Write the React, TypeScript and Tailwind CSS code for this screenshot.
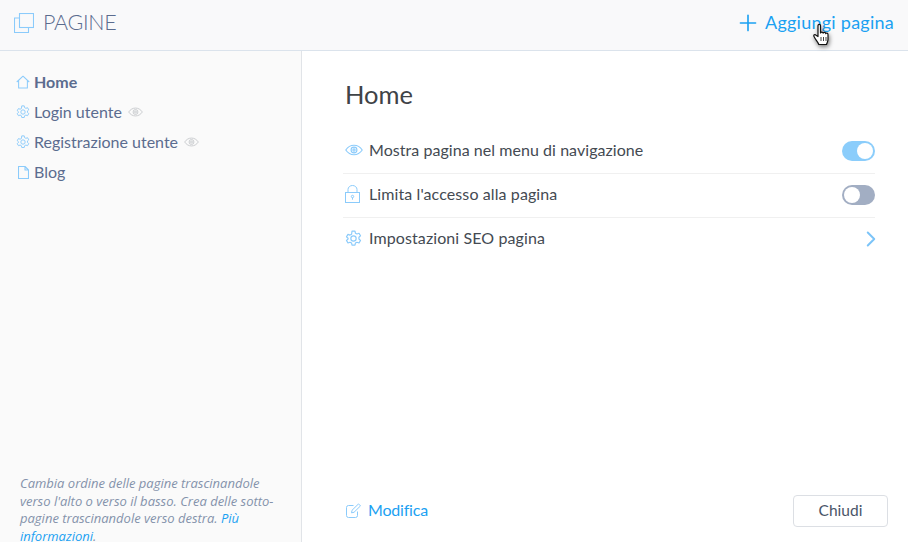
import { ChevronRight, Plus } from "lucide-react";

const pages = [
  { id: 1, title: "Home", icon: "home", active: true, hidden: false },
  { id: 2, title: "Login utente", icon: "gear", active: false, hidden: true },
  { id: 3, title: "Registrazione utente", icon: "gear", active: false, hidden: true },
  { id: 4, title: "Blog", icon: "page", active: false, hidden: false },
];

function EyeIcon({ className }: { className: string }) {
  return (
    <svg viewBox="0 0 16 10" fill="none" stroke="currentColor" strokeWidth="1" className={className}>
      <path d="M.7 5C2.600 2.200 5.100.8 8 .8s5.400 1.400 7.300 4.200C13.400 7.800 10.900 9.200 8 9.200S2.600 7.800.7 5z" />
      <circle cx="8" cy="5" r="2.600" />
      <circle cx="8" cy="5" r="1" />
    </svg>
  );
}

function GearIcon({ className }: { className: string }) {
  return (
    <svg viewBox="0 0 16 16" fill="none" stroke="currentColor" strokeWidth="1.100" className={className}>
      <path d="M6.600 1h2.800l.4 2 1.500.8 1.900-.7 1.400 2.400-1.500 1.300v1.700l1.500 1.300-1.400 2.400-1.900-.7-1.500.8-.4 2H6.600l-.4-2-1.500-.8-1.900.7-1.400-2.400 1.500-1.300V7.800L1.400 6.500l1.400-2.400 1.900.7 1.500-.8z" strokeLinejoin="round" />
      <circle cx="8" cy="8" r="2.500" />
    </svg>
  );
}

function PageIcon({ name }: { name: string }) {
  if (name === "home") {
    return (
      <svg viewBox="0 0 15 14" fill="none" stroke="currentColor" strokeWidth="1.100" className="w-[15px] h-[14px] text-[#8bcbfb]">
        <path d="M.8 7L7.500.8 14.200 7M2.800 5.500V13.500h9.400V5.500" strokeLinejoin="round" />
      </svg>
    );
  }
  if (name === "gear") {
    return <GearIcon className="w-[14px] h-[14px] text-[#8bcbfb]" />;
  }
  return (
    <svg viewBox="0 0 11 13" fill="none" stroke="currentColor" strokeWidth="1.100" className="w-[11px] h-[13px] ml-[2px] mr-[1px] text-[#8bcbfb]">
      <path d="M.5.5h6.500l3.500 3.500v8.500h-10zM7 .5V4h3.500" strokeLinejoin="round" />
    </svg>
  );
}

function Toggle({ on }: { on: boolean }) {
  return (
    <div
      className={
        on
          ? "flex justify-end items-center w-[33px] h-[20px] p-[2px] rounded-full bg-[#8bcdfb]"
          : "flex justify-start items-center w-[33px] h-[20px] p-[2px] rounded-full bg-[#a2aec3]"
      }
    >
      <div className="w-[16px] h-[16px] rounded-full bg-white" />
    </div>
  );
}

export default function App() {
  return (
    <div className="relative flex flex-col w-[908px] h-[542px] overflow-hidden bg-white font-['Lato','Open_Sans',sans-serif]">
      <header className="flex shrink-0 justify-between items-center h-[51px] pl-[14px] pr-[14px] pb-[5px] bg-[#f9f9fa] border-b border-[#dbe3ec]">
        <div className="flex items-center gap-[9px]">
          <svg viewBox="0 0 20 20" fill="none" stroke="#8bcbfb" strokeWidth="1.100" className="w-[20px] h-[20px]">
            <rect x="5.500" y="0.500" width="14" height="14" />
            <path d="M5.500 5H.5v14.500h14V14.500" />
          </svg>
          <span className="text-[21.500px] font-light text-[#5b6c8f] leading-none tracking-[-0.3px]">PAGINE</span>
        </div>
        <div className="flex items-center gap-[4px] text-[#1ba1f2]">
          <Plus size={26} strokeWidth={1.500} />
          <span className="text-[18px] tracking-[0.25px]">Aggiungi pagina</span>
        </div>
      </header>

      <div className="flex flex-1 min-h-0">
        <aside className="flex flex-col justify-between w-[302px] shrink-0 bg-[#fafafa] border-r border-[#e1e4e8] pl-[16px] pr-[20px] pt-[16px]">
          <ul className="flex flex-col">
            {pages.map((page) => (
              <li key={page.id} className="flex items-center gap-[4px] h-[30px]">
                <span className="flex justify-center w-[14px]">
                  <PageIcon name={page.icon} />
                </span>
                <span
                  className={
                    page.active
                      ? "text-[16px] font-bold text-[#5b6c8f]"
                      : "text-[16px] text-[#5b6c8f]"
                  }
                >
                  {page.title}
                </span>
                {page.hidden && <EyeIcon className="w-[15px] h-[10px] ml-[2px] text-[#c8cacd]" />}
              </li>
            ))}
          </ul>
          <p className="pl-[4px] -mb-[3px] font-['Open_Sans',sans-serif] text-[13px] leading-[17.500px] italic text-[#8492ab]">
            Cambia ordine delle pagine trascinandole verso l'alto o verso il basso. Crea delle sotto-pagine
            trascinandole verso destra. <span className="text-[#1ba1f2]">Più informazioni</span>.
          </p>
        </aside>

        <main className="flex flex-col flex-1 pl-[41px] pr-[33px] pt-[26px] pb-[15px]">
          <h1 className="pl-[2px] text-[25.500px] leading-[34px] text-[#3f4347]">Home</h1>
          <div className="flex flex-col mt-[18px]">
            <div className="flex justify-between items-center h-[45px] border-b border-[#f0f0f0]">
              <div className="flex items-center gap-[6px] pb-[2px]">
                <EyeIcon className="w-[18px] h-[12px] ml-[2px] text-[#8bcbfb]" />
                <span className="text-[16px] text-[#444a52] tracking-[0.05px]">Mostra pagina nel menu di navigazione</span>
              </div>
              <Toggle on />
            </div>
            <div className="flex justify-between items-center h-[44px] pb-[1px] border-b border-[#f0f0f0]">
              <div className="flex items-center gap-[9px] pb-[2px]">
                <svg viewBox="0 0 15 18" fill="none" stroke="#8bcbfb" strokeWidth="1" className="w-[15px] h-[18px] ml-[2px]">
                  <rect x="0.500" y="7.500" width="14" height="10" />
                  <path d="M3 7.500V4.500a4.500 4 0 0 1 9 0v3" />
                  <circle cx="7.500" cy="11.500" r="1.200" />
                  <path d="M7.500 12.700v2" />
                </svg>
                <span className="text-[16px] text-[#444a52] tracking-[0.1px]">Limita l'accesso alla pagina</span>
              </div>
              <Toggle on={false} />
            </div>
            <div className="flex justify-between items-center h-[42px]">
              <div className="flex items-center gap-[7px] pb-[2px]">
                <GearIcon className="w-[17px] h-[17px] ml-[2px] text-[#8bcbfb]" />
                <span className="text-[16px] text-[#444a52] tracking-[0.1px]">Impostazioni SEO pagina</span>
              </div>
              <ChevronRight size={26} strokeWidth={1.800} className="-mr-[9px] -mt-[1px] text-[#7cc4f8]" />
            </div>
          </div>
          <div className="flex justify-between items-center mt-auto -mr-[13px]">
            <div className="flex items-center gap-[7px] pl-[3px] pb-[2px] text-[#1ba1f2]">
              <svg viewBox="0 0 15 15" fill="none" stroke="#8bcbfb" strokeWidth="1" className="w-[15px] h-[15px]">
                <path d="M11.500 8.500v4a2 2 0 0 1-2 2h-7a2 2 0 0 1-2-2v-8a2 2 0 0 1 2-2h5" />
                <path d="M5.500 9.800l.5-2.500L12.500.9l2 2-6.500 6.400z" strokeLinejoin="round" />
              </svg>
              <span className="text-[16px] tracking-[-0.2px]">Modifica</span>
            </div>
            <button className="w-[95px] h-[32px] border border-[#dcdfe4] rounded-[4px] bg-white text-[15.500px] text-[#4a5568]">
              Chiudi
            </button>
          </div>
        </main>
      </div>

      {/* mouse cursor sits on top of the button text */}
      <svg viewBox="0 0 20 26" className="absolute left-[812px] top-[23px] w-[20px] h-[26px] drop-shadow-[1px_2px_2px_rgba(0,0,0,0.5)]">
        <path
          d="M6 2.500c0-1.600 2.500-1.600 2.500 0V10c.3-1.300 2.500-1.300 2.700.2.300-1.200 2.400-1.100 2.600.4.400-.9 2.200-.7 2.200.8v5.100c0 2-1 3.200-1.500 5H6.800c-.8-2.400-3-4.300-4.800-8-.7-1.500.9-2.500 2-1.300L6 13.500z"
          fill="#fff"
          stroke="#111"
          strokeWidth="1.200"
          strokeLinejoin="round"
        />
        <path d="M9 14v4M11.500 14v4M14 14v4" stroke="#111" strokeWidth="0.800" />
      </svg>
    </div>
  );
}
